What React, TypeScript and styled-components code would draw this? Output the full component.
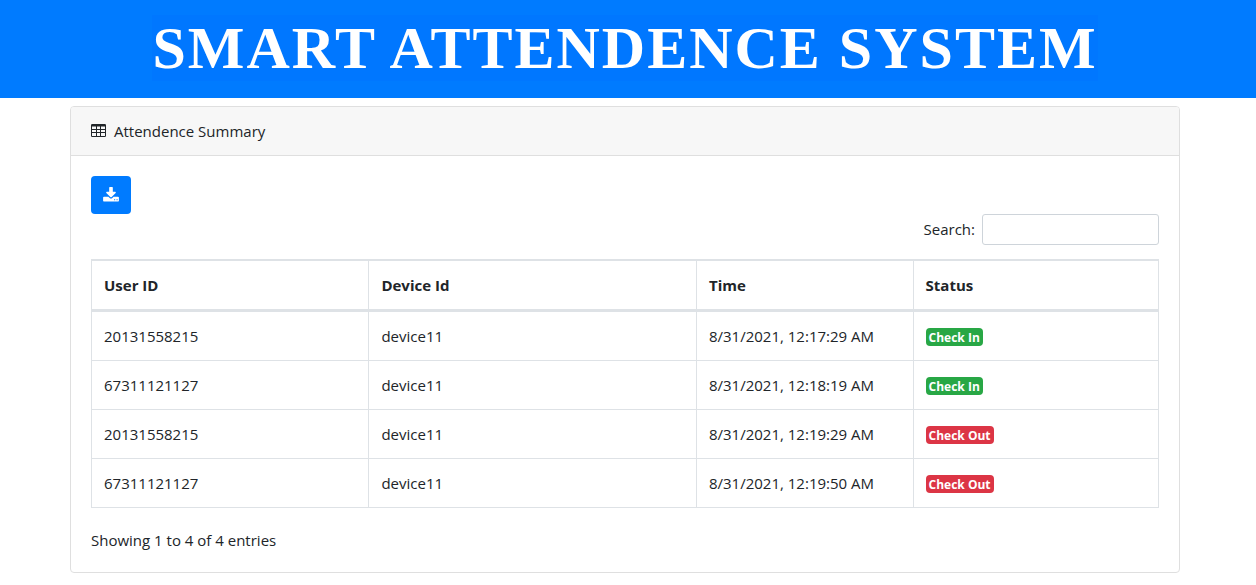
import React from 'react';
import styled, { createGlobalStyle } from 'styled-components';

const GlobalStyle = createGlobalStyle`
  *, *::before, *::after { box-sizing: border-box; }
  body {
    margin: 0;
    background: #fff;
    color: #212529;
    font-family: 'Open Sans', 'Noto Sans', sans-serif;
    font-size: 15px;
    line-height: 24px;
  }
`;

const Banner = styled.header`
  background: #007bff;
  text-align: center;
  padding: 12px 22px 14px 16px;
`;

const BannerTitle = styled.h1`
  margin: 0;
  color: #fff;
  font: bold 60px/72px 'Liberation Serif', serif;
  letter-spacing: 2px;
`;

const TitleMark = styled.span`
  background: #0077ff;
`;

const Page = styled.main`
  padding: 8px 6px 0 0;
`;

const Container = styled.div`
  max-width: 1140px;
  margin: 0 auto;
  padding: 0 15px;
`;

const Card = styled.section`
  border: 1px solid #dfdfdf;
  border-radius: 4px;
  background: #fff;
`;

const CardHeader = styled.h2`
  display: flex;
  align-items: center;
  gap: 8px;
  margin: 0;
  padding: 12px 20px;
  background: #f7f7f7;
  border-bottom: 1px solid #dfdfdf;
  border-radius: 3px 3px 0 0;
  font-size: 15px;
  font-weight: 400;
`;

const CardBody = styled.div`
  padding: 20px;
`;

const DownloadButton = styled.button`
  display: flex;
  align-items: center;
  justify-content: center;
  width: 40px;
  height: 38px;
  padding: 0;
  border: 0;
  border-radius: 4px;
  background: #007bff;
  color: #fff;
  cursor: pointer;
`;

const SearchRow = styled.div`
  display: flex;
  justify-content: flex-end;
  align-items: flex-start;
  gap: 7px;
`;

const SearchLabel = styled.label`
  line-height: 30px;
`;

const SearchInput = styled.input`
  width: 177px;
  height: 31px;
  padding: 4px 8px;
  border: 1px solid #ced4da;
  border-radius: 3px;
  font: inherit;
`;

const Table = styled.table`
  width: 100%;
  margin: 14px 0 20px;
  table-layout: fixed;
  border-collapse: separate;
  border-spacing: 0;
  border: 1px solid #dee2e6;
  border-width: 1px 0 0 1px;
`;

const HeadCell = styled.th<{ $width: string }>`
  width: ${(p) => p.$width};
  padding: 12px;
  text-align: left;
  font-weight: 700;
  border: 1px solid #dee2e6;
  border-width: 1px 1px 3px 0;
`;

const Cell = styled.td`
  padding: 12px;
  border: 1px solid #dee2e6;
  border-width: 0 1px 1px 0;
`;

const Badge = styled.span<{ $out: boolean }>`
  display: inline-block;
  padding: 4px 3px 2px;
  border-radius: 4px;
  background: ${(p) => (p.$out ? '#dc3545' : '#28a745')};
  color: #fff;
  font-size: 12px;
  font-weight: 700;
  line-height: 12px;
  vertical-align: baseline;
`;

const Info = styled.p`
  margin: 0;
`;

const TableIcon = () => (
  <svg width="15" height="14" viewBox="0 0 15 14" fill="currentColor" aria-hidden="true">
    <path
      fillRule="evenodd"
      d="M1.2 0h12.6q1.2 0 1.2 1.2v10.6q0 1.2-1.2 1.2h-12.6q-1.2 0-1.2-1.2v-10.6q0-1.2 1.2-1.2zM1 2.4v2.6h4v-2.6zm5 0v2.6h3v-2.6zm4 0v2.6h4v-2.6zM1 6v2h4v-2zm5 0v2h3v-2zm4 0v2h4v-2zM1 9v3h4v-3zm5 0v3h3v-3zm4 0v3h4v-3z"
    />
  </svg>
);

const DownloadIcon = () => (
  <svg width="16" height="17" viewBox="0 0 1664 1792" fill="currentColor" aria-hidden="true">
    <path d="M1280 1344q0-26-19-45t-45-19-45 19-19 45 19 45 45 19 45-19 19-45zm256 0q0-26-19-45t-45-19-45 19-19 45 19 45 45 19 45-19 19-45zm128-224v320q0 40-28 68t-68 28h-1472q-40 0-68-28t-28-68v-320q0-40 28-68t68-28h465l135 136q58 56 136 56t136-56l136-136h464q40 0 68 28t28 68zm-325-569q17 41-14 70l-448 448q-18 19-45 19t-45-19l-448-448q-31-29-14-70 17-39 59-39h256v-448q0-26 19-45t45-19h256q26 0 45 19t19 45v448h256q42 0 59 39z" />
  </svg>
);

const columns = [
  { label: 'User ID', width: '26%' },
  { label: 'Device Id', width: '30.7%' },
  { label: 'Time', width: '20.3%' },
  { label: 'Status', width: '23%' },
];

const records = [
  { user: '20131558215', device: 'device11', time: '8/31/2021, 12:17:29 AM', status: 'Check In' },
  { user: '67311121127', device: 'device11', time: '8/31/2021, 12:18:19 AM', status: 'Check In' },
  { user: '20131558215', device: 'device11', time: '8/31/2021, 12:19:29 AM', status: 'Check Out' },
  { user: '67311121127', device: 'device11', time: '8/31/2021, 12:19:50 AM', status: 'Check Out' },
];

export default function App() {
  return (
    <>
      <GlobalStyle />
      <Banner>
        <BannerTitle>
          <TitleMark>SMART ATTENDENCE SYSTEM</TitleMark>
        </BannerTitle>
      </Banner>
      <Page>
        <Container>
          <Card>
            <CardHeader>
              <TableIcon />
              Attendence Summary
            </CardHeader>
            <CardBody>
              <DownloadButton type="button" aria-label="Download">
                <DownloadIcon />
              </DownloadButton>
              <SearchRow>
                <SearchLabel htmlFor="search">Search:</SearchLabel>
                <SearchInput id="search" type="search" />
              </SearchRow>
              <Table>
                <thead>
                  <tr>
                    {columns.map((c) => (
                      <HeadCell key={c.label} scope="col" $width={c.width}>
                        {c.label}
                      </HeadCell>
                    ))}
                  </tr>
                </thead>
                <tbody>
                  {records.map((r) => (
                    <tr key={r.time}>
                      <Cell>{r.user}</Cell>
                      <Cell>{r.device}</Cell>
                      <Cell>{r.time}</Cell>
                      <Cell>
                        <Badge $out={r.status === 'Check Out'}>{r.status}</Badge>
                      </Cell>
                    </tr>
                  ))}
                </tbody>
              </Table>
              <Info>Showing 1 to 4 of 4 entries</Info>
            </CardBody>
          </Card>
        </Container>
      </Page>
    </>
  );
}
